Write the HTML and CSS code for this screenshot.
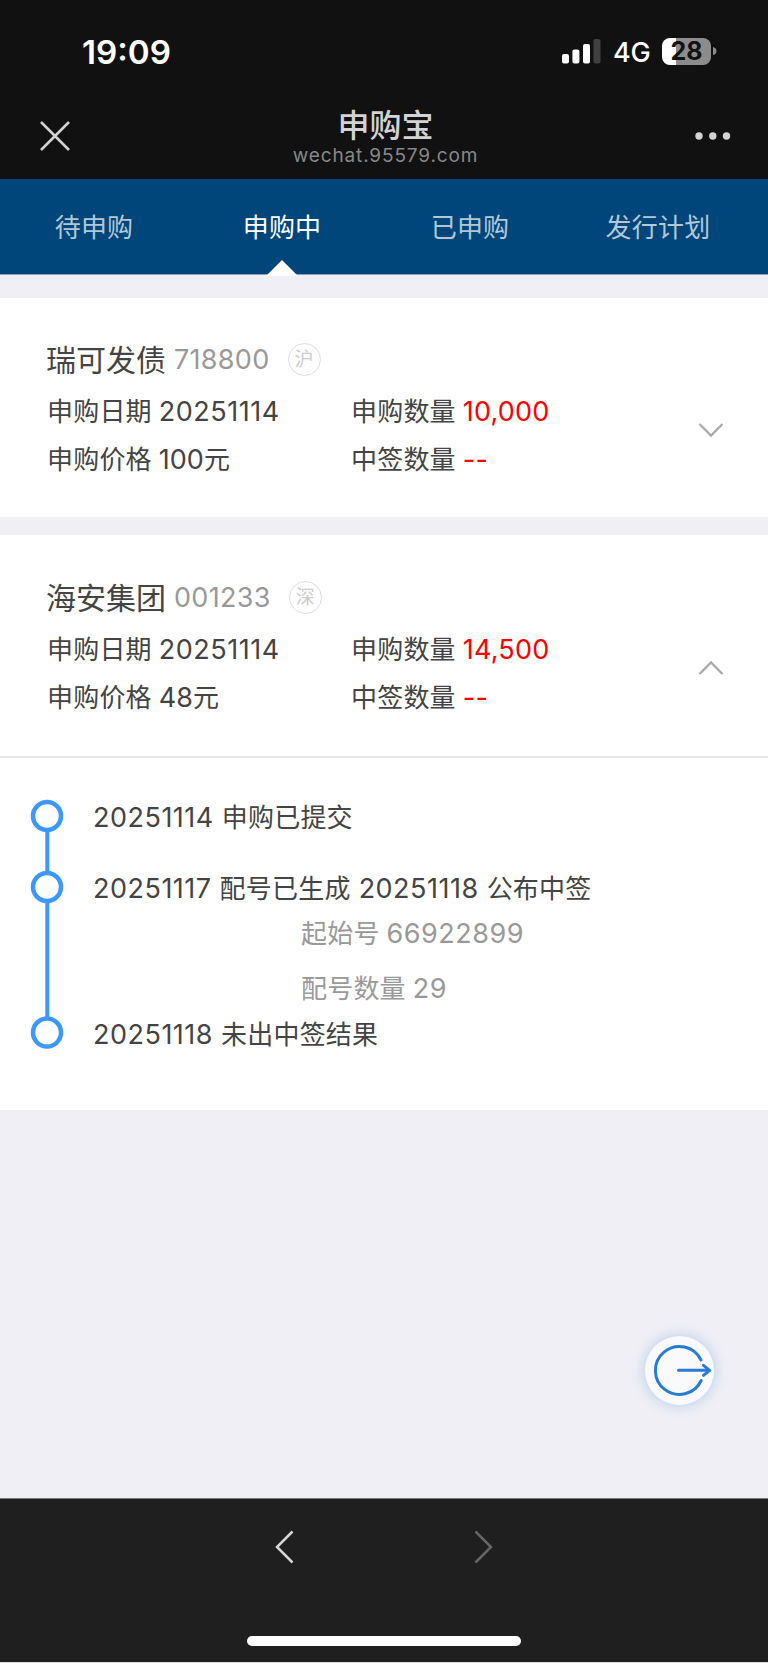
FILE: index.html
```html
<!DOCTYPE html>
<html lang="zh-CN">
<head>
<meta charset="utf-8">
<title>申购宝</title>
<link rel="stylesheet" href="styles.css">
</head>
<body>
<div class="screen">
  <header class="top">
    <div class="status">
      <span class="clock">19:09</span>
      <div class="status-icons">
        <svg class="signal" width="39" height="25" viewBox="0 0 39 25">
          <rect x="0" y="15" width="7" height="9.5" rx="2" fill="#fff"/>
          <rect x="10.4" y="10.5" width="7" height="14" rx="2" fill="#fff"/>
          <rect x="21" y="5" width="7" height="19.500" rx="2" fill="#fff"/>
          <rect x="31.500" y="0" width="7" height="24.500" rx="2" fill="#404040"/>
        </svg>
        <span class="network">4G</span>
        <div class="battery"><span>28</span></div>
        <svg class="battery-tip" width="4" height="10" viewBox="0 0 4 10"><path d="M0 1Q3.500 2 3.500 5T0 9z" fill="#8c8c8c"/></svg>
      </div>
    </div>
    <div class="navbar">
      <svg class="close" width="30" height="30" viewBox="0 0 30 30" fill="none" stroke="#d3d3d3" stroke-width="2.500"><path d="M1 1L29 29M29 1L1 29"/></svg>
      <div class="heading">
        <h1>申购宝</h1>
        <p>wechat.95579.com</p>
      </div>
      <svg class="more" width="36" height="8" viewBox="0 0 36 8" fill="#d3d3d3"><circle cx="4" cy="4" r="3.700"/><circle cx="17.800" cy="4" r="3.700"/><circle cx="31.500" cy="4" r="3.700"/></svg>
    </div>
  </header>
  <nav class="tabs">
    <a class="tab">待申购</a>
    <a class="tab active">申购中</a>
    <a class="tab">已申购</a>
    <a class="tab">发行计划</a>
  </nav>
  <main class="list">
    <section class="card">
      <div class="info">
        <h2 class="name">瑞可发债<span class="code">718800</span><span class="market">沪</span></h2>
        <div class="fields">
          <p>申购日期<span class="num date">20251114</span></p>
          <p>申购数量<span class="num red">10,000</span></p>
          <p>申购价格<span class="num">100</span>元</p>
          <p>中签数量<span class="num red dash">--</span></p>
        </div>
      </div>
      <svg class="chevron" width="26" height="16" viewBox="0 0 26 16" fill="none" stroke="#aaa" stroke-width="2.300"><path d="M1.500 2L13 13.500L24.500 2"/></svg>
    </section>
    <section class="card expanded">
      <div class="info">
        <h2 class="name">海安集团<span class="code">001233</span><span class="market">深</span></h2>
        <div class="fields">
          <p>申购日期<span class="num date">20251114</span></p>
          <p>申购数量<span class="num red">14,500</span></p>
          <p>申购价格<span class="num">48</span>元</p>
          <p>中签数量<span class="num red dash">--</span></p>
        </div>
      </div>
      <svg class="chevron" width="26" height="16" viewBox="0 0 26 16" fill="none" stroke="#aaa" stroke-width="2.300"><path d="M1.500 14L13 2.500L24.500 14"/></svg>
    </section>
    <section class="progress">
      <svg class="rail" width="34" height="252" viewBox="0 0 34 252" fill="#fff" stroke="#3b98ff">
        <path d="M17.300 18V235" stroke-width="4"/>
        <circle cx="17" cy="18" r="14" stroke-width="4.500"/>
        <circle cx="17" cy="89" r="14" stroke-width="4.500"/>
        <circle cx="17" cy="234.600" r="14" stroke-width="4.500"/>
      </svg>
      <div class="steps">
        <p class="step first"><span class="num date lead">20251114</span>申购已提交</p>
        <p class="step"><span class="num date lead">20251117</span>配号已生成<span class="num date lead mid">20251118</span>公布中签</p>
        <div class="lots">
          <p>起始号<span class="num date">66922899</span></p>
          <p>配号数量<span class="num date">29</span></p>
        </div>
        <p class="step"><span class="num date lead">20251118</span>未出中签结果</p>
      </div>
    </section>
  </main>
  <button class="exit" aria-label="退出">
    <svg width="68" height="68" viewBox="0 0 68 68" fill="none" stroke="#287bd2" stroke-width="3" stroke-linecap="round" stroke-linejoin="round"><path d="M56 23A24 24 0 1 0 56.200 43.500M33.500 33.300H64.500M58.500 28.300L64.700 33.300L58.500 38.300"/></svg>
  </button>
  <footer class="bottom">
    <div class="history">
      <svg width="20" height="36" viewBox="0 0 20 36" fill="none" stroke="#d6d6d6" stroke-width="2.500"><path d="M17.500 2.500L2 18L17.500 33.500"/></svg>
      <svg width="20" height="36" viewBox="0 0 20 36" fill="none" stroke="#666" stroke-width="2.500"><path d="M2.500 2.500L18 18L2.500 33.500"/></svg>
    </div>
    <div class="home"></div>
  </footer>
</div>
</body>
</html>
```

FILE: styles.css
```css
* { box-sizing: border-box; margin: 0; padding: 0; }
body {
  background: #f0eff5;
  color: #444;
  font-family: Inter, "Noto Sans CJK SC", sans-serif;
  font-size: 26px;
}
svg { display: block; flex: none; }
.screen {
  position: relative;
  display: flex;
  flex-direction: column;
  width: 768px;
  height: 1663px;
  overflow: hidden;
  background: #f0eff5;
}

/* Status bar and title */
.top { height: 179px; background: #111; }
.status {
  display: flex;
  justify-content: space-between;
  height: 94px;
  padding: 33px 51px 0 82px;
}
.clock { color: #fff; font-size: 33.2px; font-weight: 600; line-height: 38px; }
.status-icons { display: flex; align-items: flex-start; }
.signal { margin-top: 6px; }
.network { width: 37px; margin: 0 12px 0 12px; color: #fff; font-size: 27px; font-weight: 500; line-height: 39px; letter-spacing: -.3px; }
.battery {
  width: 49px;
  height: 27px;
  margin-top: 4.500px;
  border-radius: 8px;
  background: linear-gradient(90deg, #fff 14px, #8c8c8c 14px);
  color: #111;
  font-size: 25px;
  font-weight: 700;
  line-height: 27px;
  text-align: center;
}
.battery-tip { margin: 13px 0 0 2px; }
.navbar { display: flex; justify-content: space-between; height: 85px; padding: 0 37px 0 40px; }
.close { margin: 27px 6px 0 0; }
.more { margin-top: 38px; }
.heading { display: flex; flex-direction: column; align-items: center; padding-top: 12px; }
.heading h1 { color: #d3d3d3; font-size: 32px; font-weight: 500; line-height: 39px; }
.heading p { color: #888; font-size: 19px; line-height: 22px; letter-spacing: .87px; }

/* Tabs */
.tabs {
  display: grid;
  grid-template-columns: repeat(4, 188px);
  height: 96px;
  background: #00467b;
  border-bottom: 1px solid #8ca3bc;
}
.tab {
  display: flex;
  flex-direction: column;
  align-items: center;
  height: 97px;
  padding-top: 30px;
  color: #b3c8d7;
  line-height: 38px;
  letter-spacing: .2px;
}
.active { color: #fff; }
.active::after {
  content: "";
  width: 32px;
  height: 16px;
  margin-top: 13px;
  background: #fff;
  clip-path: polygon(50% 0, 100% 100%, 0 100%);
}

/* Cards */
.list { padding-top: 23px; }
.card {
  display: flex;
  align-items: flex-start;
  height: 219px;
  margin-bottom: 18px;
  padding: 39px 44px 0 47px;
  background: #fff;
}
.expanded { height: 223px; margin-bottom: 0; padding-top: 40px; border-bottom: 2px solid #e7e7e7; }
.info { flex: 1; }
.name { display: flex; align-items: center; height: 46px; margin-left: -1px; font-size: 30px; font-weight: 400; line-height: 44px; white-space: nowrap; }
.code { margin-left: 8px; color: #999; font-size: 27px; letter-spacing: .3px; }
.market {
  width: 33px;
  height: 33px;
  margin: -1px 0 0 18px;
  border: 1px solid #ddd;
  border-radius: 50%;
  color: #ccc;
  font-size: 19px;
  line-height: 32px;
  text-align: center;
}
.fields { display: grid; grid-template-columns: 304px 1fr; padding-top: 5px; }
.fields p { height: 47.500px; line-height: 47.500px; white-space: nowrap; letter-spacing: .2px; }
.fields .red { letter-spacing: .2px; }
.num { margin-left: 7px; font-size: 27px; letter-spacing: 0; }
.date { letter-spacing: .5px; }
.red { color: #f00; }
.chevron { margin-top: 85px; }

/* Lottery progress */
.progress { display: flex; height: 352px; padding: 40px 30px 0; background: #fff; }
.steps { flex: 1; padding-left: 29px; }
.step { height: 38px; line-height: 39px; letter-spacing: .2px; white-space: nowrap; }
.first { margin-bottom: 33px; }
.lead { margin: 0 8px 0 0; }
.mid { margin-left: 8px; }
.lots { height: 108px; padding: 0 0 0 208px; color: #999; }
.lots p { height: 55px; line-height: 53px; letter-spacing: .2px; }

.exit {
  position: absolute;
  left: 645px;
  top: 1336px;
  width: 69px;
  height: 69px;
  border: 0;
  border-radius: 50%;
  background: #fafafd;
  box-shadow: 0 0 14px rgba(40, 123, 210, .32);
}

/* Browser toolbar */
.bottom {
  display: flex;
  flex-direction: column;
  align-items: center;
  justify-content: space-between;
  height: 165px;
  margin-top: auto;
  padding: 30px 0 16px;
  border-top: 1px solid #77777a;
  border-bottom: 1px solid #ddd;
  background: #1f1f1f;
}
.history { display: flex; justify-content: space-between; width: 218px; }
.home { width: 274px; height: 10px; border-radius: 5px; background: #fff; }
```
